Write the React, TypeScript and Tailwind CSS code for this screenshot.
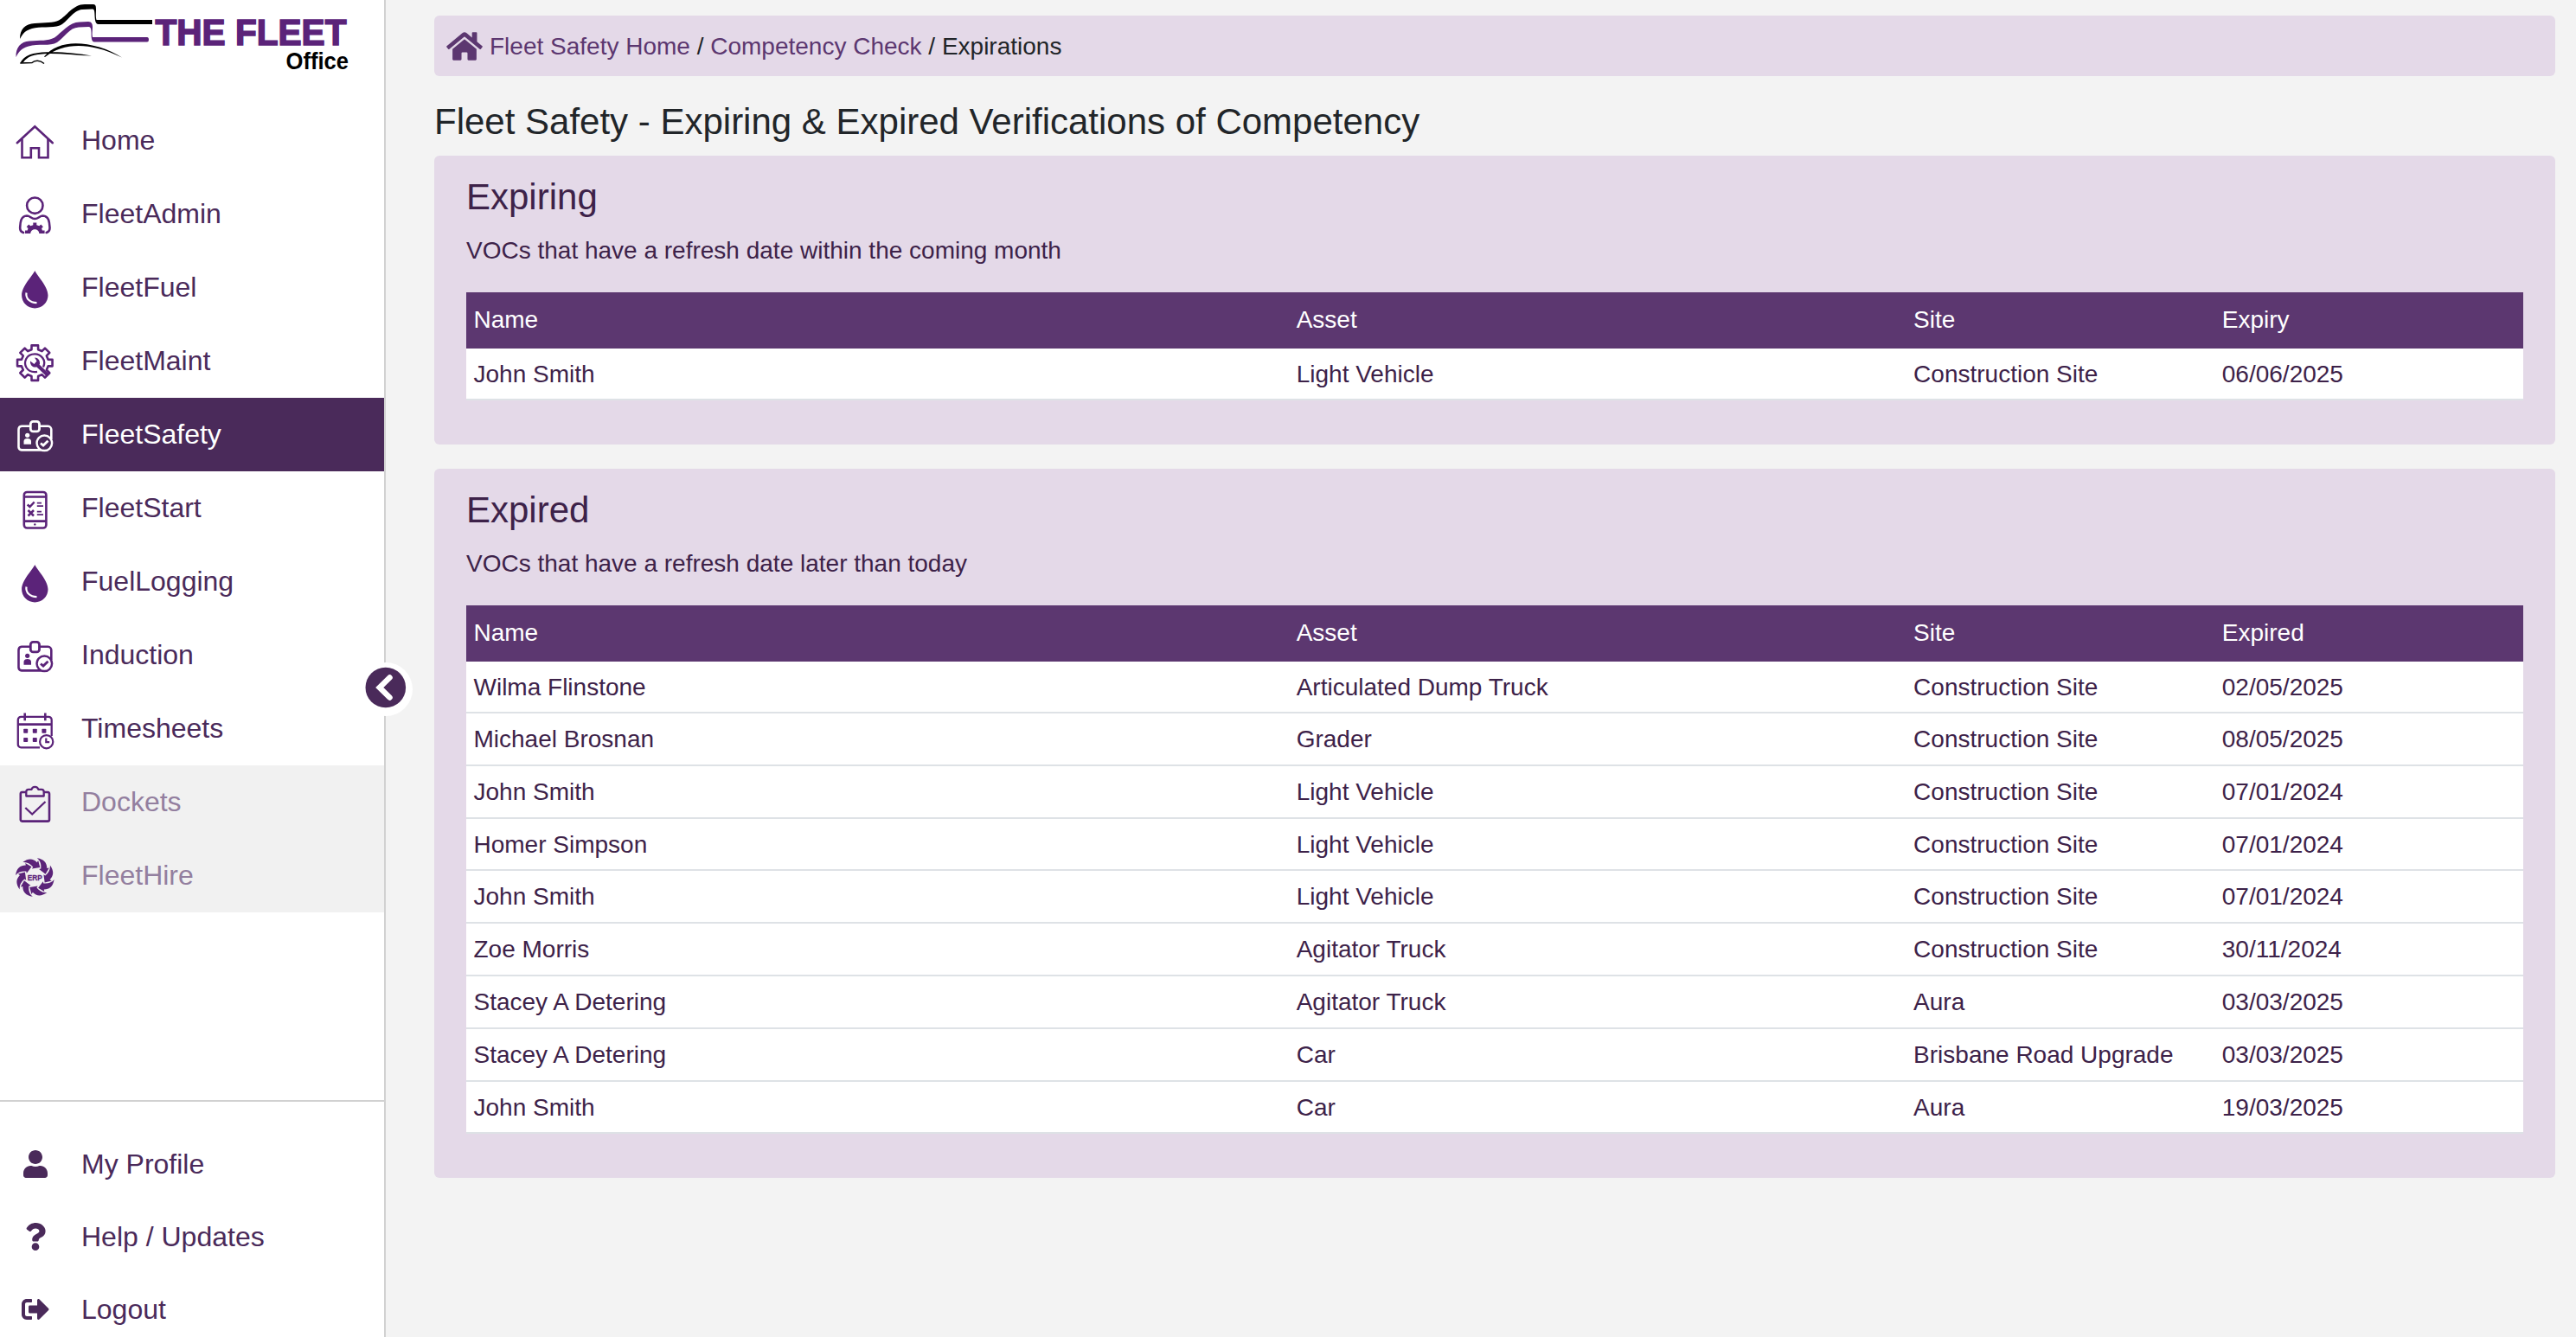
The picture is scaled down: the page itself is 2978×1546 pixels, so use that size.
import React from "react";
import { FaHome, FaQuestion, FaSignOutAlt, FaUser } from "react-icons/fa";

const PURPLE = "#5b2379";

function Logo() {
  return (
    <svg viewBox="0 0 444 100" className="block h-[100px] w-[444px]" fill="none">
      <path
        d="M23 45C23 34 29 27.500 40 27C52 26 62 26.500 68 23.500C77 19 84 5 98 5L107 5C110 5 111 6 111 10C111 16 110.500 19 111.500 23L176 23L176 28L114 28C111.500 28 110.500 26 110 23.500C109 15 110 11 107 10.500L95 11C84 12 78 26 69 29.500C60 33 46 30 37 33C29 35.500 27 38 23 45Z"
        fill="#000"
      />
      <path
        d="M18.500 66C18 55 24 48 34 47.500C47 46.500 55 47.500 63 43.500C71 38 80 25.500 92 25.500L102 25C106 25 107 28 107 31C107 36 106 39 107 43L170 43Q172 43 172 46Q172 48.500 170 48.500L109 48.500C106 48.500 105.500 44 105.500 38C105.500 34 105 31 102.500 31L91 31.500C80 32 75 43 66 49C58 54 44 50 33 53.500C24 56 22 60 18.500 66Z"
        fill={PURPLE}
      />
      <path
        d="M51 65.500C65 49 88 47 115 54.500C125 57.500 134 62 141 66.500C131 62 122 58 113 56C90 50 68 53 52 66ZM23 73.500C28 63 38 61 54 60.200C72 59.500 90 62 106 64.500C88 64 70 61.500 54 62C38 63 32 65 27 72Z"
        fill="#000"
      />
      <path d="M23.500 73L37 72.500C40 69.500 46 69 51 73.500" stroke="#000" strokeWidth="1.500" />
      <text
        x="179.500"
        y="52.300"
        textLength="221"
        lengthAdjust="spacingAndGlyphs"
        fill={PURPLE}
        stroke={PURPLE}
        strokeWidth="1.600"
        className="font-['Liberation_Sans',sans-serif] text-[42.5px] font-bold"
      >
        THE FLEET
      </text>
      <text
        x="330.500"
        y="79.700"
        textLength="72.500"
        lengthAdjust="spacingAndGlyphs"
        fill="#000"
        className="font-['Liberation_Sans',sans-serif] text-[28px] font-bold"
      >
        Office
      </text>
    </svg>
  );
}

function Glyph({ children }: { children: React.ReactNode }) {
  return (
    <svg
      viewBox="0 0 44 44"
      className="size-11 shrink-0 overflow-visible"
      fill="none"
      stroke="currentColor"
      strokeWidth="2.600"
    >
      {children}
    </svg>
  );
}

const HomeIcon = () => (
  <Glyph>
    <path d="M1.800 22.200L22.300 3.300L42.800 22.200" strokeLinecap="round" />
    <path d="M7.500 18V39.300H17.800V28.300H27V39.300H37.500V18" />
  </Glyph>
);

const AdminIcon = () => (
  <Glyph>
    <circle cx="22.300" cy="9.700" r="9.200" />
    <path
      d="M9 41C6 40 5 38 5.200 35C5.500 30 5.500 22 13 21.500C17 21.500 18 25 22.300 25C26.600 25 27.600 21.500 31.600 21.500C39 22 39.200 30 39.500 35C39.700 38 38.500 40 35.700 41"
      strokeLinecap="round"
    />
    <path
      d="M11 42V38.500H13.700L14.500 36L12.700 34.200L15.300 31.600L17.200 33.300L20.300 32.200V29.500H24.300V32.200L27.400 33.300L29.300 31.600L31.900 34.200L30.100 36L30.900 38.500H33.600V42H27.300C27.300 35.500 17.300 35.500 17.300 42Z"
      fill="currentColor"
      stroke="none"
    />
  </Glyph>
);

const DropIcon = () => (
  <Glyph>
    <path
      d="M22.300 0C25 6 37.500 18 37.500 28.500A15.200 15 0 0 1 7.100 28.500C7.100 18 19.500 6 22.300 0Z"
      fill="currentColor"
      stroke="none"
    />
    <path d="M12.500 25.500C11.500 32 16.500 37.300 24.500 37.200" stroke="#fff" strokeWidth="2.200" />
  </Glyph>
);

const gearPath = (() => {
  const pts: string[] = [];
  for (let i = 0; i < 8; i++) {
    const base = i * 45 - 90;
    const corners: [number, number][] = [
      [-14, 15.8],
      [-10.500, 20.600],
      [10.500, 20.600],
      [14, 15.8],
    ];
    for (const [offset, r] of corners) {
      const a = ((base + offset) * Math.PI) / 180;
      pts.push(`${(22.3 + r * Math.cos(a)).toFixed(2)} ${(21.6 + r * Math.sin(a)).toFixed(2)}`);
    }
  }
  return "M" + pts.join("L") + "Z";
})();

const MaintIcon = () => (
  <Glyph>
    <path d={gearPath} strokeLinejoin="round" />
    <path d="M32 26.500C36 18 29 11.300 22.300 11.300C12 11.300 9 21 12.500 27C15 31 19 32.800 25 31.800" strokeWidth="2.300" />
    <path d="M25.500 24.500L37 35.500" strokeWidth="4.200" />
    <path
      d="M17 19.500C16.500 24 20 28 25 26L28 23C28.500 19 26 15.500 22 15.500L24.500 19.500L21.500 23Z"
      fill="currentColor"
      stroke="none"
    />
  </Glyph>
);

const BadgeIcon = () => (
  <Glyph>
    <path d="M17 9.800H7A4 4 0 0 0 3.500 13.800V33.800A4 4 0 0 0 7 37.400H29M27.800 9.800H37.500A4 4 0 0 1 41.300 13.800V25" />
    <rect x="17.300" y="4.300" width="10.200" height="11.600" rx="3" strokeWidth="2.800" />
    <circle cx="13.700" cy="20.300" r="2.600" fill="currentColor" stroke="none" />
    <path d="M9.500 30.800V27.500Q9.500 24 13.700 24Q18 24 18 27.500V30.800Z" fill="currentColor" stroke="none" />
    <circle cx="33.300" cy="29.300" r="8.800" strokeWidth="2.500" />
    <path d="M29 29.500L32 32L37.500 26.800" strokeWidth="2.900" />
  </Glyph>
);

const PhoneIcon = () => (
  <Glyph>
    <rect x="9.800" y="1" width="25.600" height="41.500" rx="3.500" />
    <path d="M9.800 6.500H35.400M9.800 34.600H35.400" />
    <path d="M13.700 15.500L16.500 18L21.700 12.500M14.500 22L21 28.500M21 22L14.500 28.500" strokeWidth="2.500" />
    <path d="M24.800 13.700H30M24.800 17.200H32M24.800 23.700H30M24.800 27.200H32" strokeWidth="1.800" />
    <circle cx="22.300" cy="38.400" r="1.200" fill="currentColor" stroke="none" />
  </Glyph>
);

const CalendarIcon = () => (
  <Glyph>
    <path
      d="M28 41.300H6.500A3.500 3.500 0 0 1 2.800 37.500V9.500A3.500 3.500 0 0 1 6.500 5.800H38A3.500 3.500 0 0 1 41.700 9.500V28"
      strokeWidth="2.300"
    />
    <path d="M2.800 14.600H41.700" />
    <path d="M10.700 1.500V10.300M34.300 1.500V10.300" />
    <g fill="currentColor" stroke="none">
      <rect x="9.200" y="19.800" width="5" height="5" rx="0.800" />
      <rect x="19.800" y="19.800" width="5" height="5" rx="0.800" />
      <rect x="30.400" y="19.800" width="5" height="5" rx="0.800" />
      <rect x="9.200" y="30" width="5" height="5" rx="0.800" />
      <rect x="19.800" y="30" width="5" height="5" rx="0.800" />
    </g>
    <circle cx="35.700" cy="34.700" r="7.600" strokeWidth="2.200" />
    <path d="M35.300 30.500V35.200H39.200" strokeWidth="2.200" />
  </Glyph>
);

const ClipboardIcon = () => (
  <Glyph>
    <path d="M12.500 8H7.500A2 2 0 0 0 5.800 10V40A1.800 1.800 0 0 0 7.500 41.600H37.200A1.800 1.800 0 0 0 39 40V10A2 2 0 0 0 37.200 8H32.500" />
    <path
      d="M12.300 12.500V7.500Q12.300 4.800 15 4.800H18.500C19.500 0.800 25.300 0.800 26.300 4.800H30Q32.700 4.800 32.700 7.500V12.500Z"
      strokeWidth="2.300"
      strokeLinejoin="round"
    />
    <path d="M11.300 26L19.200 33.500L34.500 19" strokeWidth="2.300" />
  </Glyph>
);

const ErpIcon = () => (
  <Glyph>
    <g fill="currentColor" stroke="none" transform="translate(22.300 21.500)">
      {[0, 45, 90, 135, 180, 225, 270, 315].map((angle) => (
        <path
          key={angle}
          d="M2.500 -22.300C10.500 -21 14 -17 14 -10.500L16.500 -11L12.300 -3.800L4.800 -9.500L7 -10C7.500 -15 6.500 -19 2.500 -22.300Z"
          transform={`rotate(${angle})`}
        />
      ))}
    </g>
    <text
      x="13.800"
      y="24.600"
      textLength="17"
      lengthAdjust="spacingAndGlyphs"
      fill="currentColor"
      stroke="currentColor"
      strokeWidth="0.300"
      className="font-['Liberation_Sans',sans-serif] text-[8.8px] font-bold"
    >
      ERP
    </text>
  </Glyph>
);

type NavEntry = { label: string; icon: React.ReactNode; state?: "active" | "disabled" };

const navItems: NavEntry[] = [
  { label: "Home", icon: <HomeIcon /> },
  { label: "FleetAdmin", icon: <AdminIcon /> },
  { label: "FleetFuel", icon: <DropIcon /> },
  { label: "FleetMaint", icon: <MaintIcon /> },
  { label: "FleetSafety", icon: <BadgeIcon />, state: "active" },
  { label: "FleetStart", icon: <PhoneIcon /> },
  { label: "FuelLogging", icon: <DropIcon /> },
  { label: "Induction", icon: <BadgeIcon /> },
  { label: "Timesheets", icon: <CalendarIcon /> },
  { label: "Dockets", icon: <ClipboardIcon />, state: "disabled" },
  { label: "FleetHire", icon: <ErpIcon />, state: "disabled" },
];

function NavItem({ label, icon, state }: NavEntry) {
  const row =
    state === "active" ? "bg-[#4a2a5a] text-white" : state === "disabled" ? "bg-[#f1f1f1] text-[#937f9f]" : "text-[#4a2a5a]";
  return (
    <a className={`flex h-[85px] gap-[32px] pl-[18px] ${row}`}>
      <span className={`pt-[23px] ${state === "active" ? "text-white" : "text-[#5b2379]"}`}>{icon}</span>
      <span className="text-[32px] leading-[84px]">{label}</span>
    </a>
  );
}

function Sidebar() {
  return (
    <aside className="relative flex h-full w-[446px] shrink-0 flex-col border-r-2 border-[#d1d1d1] bg-white">
      <div className="h-[120px]">
        <Logo />
      </div>
      <nav>
        {navItems.map((item) => (
          <NavItem key={item.label} {...item} />
        ))}
      </nav>
      <div className="mt-auto h-[274px] border-t-2 border-[#d1d1d1] pt-[30px] text-[32px] leading-[84px] text-[#4a2a5a]">
        <a className="flex h-[84px] items-center">
          <span className="flex w-[81px] justify-center">
            <FaUser className="size-8" />
          </span>
          <span className="pl-[13px]">My Profile</span>
        </a>
        <a className="flex h-[84px] items-center">
          <span className="flex w-[81px] justify-center">
            <FaQuestion className="size-8" />
          </span>
          <span className="pl-[13px]">Help / Updates</span>
        </a>
        <a className="flex h-[84px] items-center">
          <span className="flex w-[81px] justify-center">
            <FaSignOutAlt className="size-8" />
          </span>
          <span className="pl-[13px]">Logout</span>
        </a>
      </div>
      <button className="absolute top-[766px] -right-[33px] size-[62px] rounded-full bg-white">
        <svg viewBox="0 0 62 62" className="block size-[62px]">
          <circle cx="30.800" cy="29" r="23.300" fill="#4a2a5a" />
          <path
            d="M35.500 17.500L23.800 29L35.500 40.500"
            fill="none"
            stroke="#fff"
            strokeWidth="6.500"
            strokeLinecap="round"
            strokeLinejoin="miter"
          />
        </svg>
      </button>
    </aside>
  );
}

type PanelProps = { title: string; note: string; lastColumn: string; rows: string[][] };

function Panel({ title, note, lastColumn, rows }: PanelProps) {
  return (
    <section className="rounded-[6px] bg-[#e4d9e8] px-[37px] pt-[23px] pb-[51px] text-[#3d2249]">
      <h2 className="h-[50px] text-[42px] leading-[50px]">{title}</h2>
      <p className="mt-[16px] mb-[27px] h-[42px] text-[28px] leading-[42px]">{note}</p>
      <div className="text-[28px]">
        <div className="grid h-[65px] grid-cols-[40fr_30fr_15fr_15fr] bg-[#5c3770] leading-[63px] text-white">
          {["Name", "Asset", "Site", lastColumn].map((head) => (
            <div key={head} className="pl-[8.5px]">
              {head}
            </div>
          ))}
        </div>
        {rows.map((row, i) => (
          <div
            key={i}
            className={`grid grid-cols-[40fr_30fr_15fr_15fr] border-b-2 border-[#dee2e6] bg-white leading-[59px] ${
              i === 0 ? "h-[60px]" : "h-[60.8px]"
            }`}
          >
            {row.map((cell, j) => (
              <div key={j} className="pl-[8.5px]">
                {cell}
              </div>
            ))}
          </div>
        ))}
      </div>
    </section>
  );
}

const expiring = [["John Smith", "Light Vehicle", "Construction Site", "06/06/2025"]];

const expired = [
  ["Wilma Flinstone", "Articulated Dump Truck", "Construction Site", "02/05/2025"],
  ["Michael Brosnan", "Grader", "Construction Site", "08/05/2025"],
  ["John Smith", "Light Vehicle", "Construction Site", "07/01/2024"],
  ["Homer Simpson", "Light Vehicle", "Construction Site", "07/01/2024"],
  ["John Smith", "Light Vehicle", "Construction Site", "07/01/2024"],
  ["Zoe Morris", "Agitator Truck", "Construction Site", "30/11/2024"],
  ["Stacey A Detering", "Agitator Truck", "Aura", "03/03/2025"],
  ["Stacey A Detering", "Car", "Brisbane Road Upgrade", "03/03/2025"],
  ["John Smith", "Car", "Aura", "19/03/2025"],
];

export default function App() {
  return (
    <div className="flex h-[1546px] w-full overflow-hidden bg-[#f3f3f3] font-['Liberation_Sans',Arial,sans-serif]">
      <Sidebar />
      <main className="flex-1 pt-[18px] pr-[24px] pl-[56px]">
        <div className="flex h-[70px] items-center rounded-[6px] bg-[#e4d9e8] pl-[14px] text-[28px] text-[#212529]">
          <FaHome className="mr-[8px] h-[37px] w-[42px] text-[#5c3770]" />
          <span className="pt-px whitespace-pre">
            <a className="text-[#5c3770]">Fleet Safety Home</a> / <a className="text-[#5c3770]">Competency Check</a> / Expirations
          </span>
        </div>
        <h1 className="mt-[28px] mb-[14px] h-[50px] text-[42px] leading-[50px] text-[#212529]">
          Fleet Safety - Expiring &amp; Expired Verifications of Competency
        </h1>
        <div className="flex flex-col gap-[28px]">
          <Panel title="Expiring" note="VOCs that have a refresh date within the coming month" lastColumn="Expiry" rows={expiring} />
          <Panel title="Expired" note="VOCs that have a refresh date later than today" lastColumn="Expired" rows={expired} />
        </div>
      </main>
    </div>
  );
}
